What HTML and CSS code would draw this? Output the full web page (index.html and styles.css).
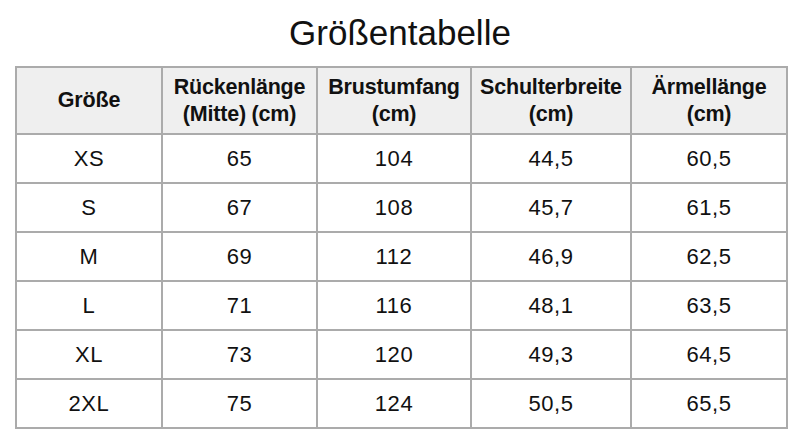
FILE: index.html
```html
<!DOCTYPE html>
<html lang="de">
<head>
<meta charset="utf-8">
<title>Größentabelle</title>
<link rel="stylesheet" href="styles.css">
</head>
<body>
<h1 class="title">Größentabelle</h1>
<table class="size-table">
  <colgroup>
    <col class="c1"><col class="c2"><col class="c3"><col class="c4"><col class="c5">
  </colgroup>
  <thead>
    <tr>
      <th>Größe</th>
      <th>Rückenlänge<br>(Mitte) (cm)</th>
      <th>Brustumfang<br>(cm)</th>
      <th>Schulterbreite<br>(cm)</th>
      <th>Ärmellänge<br>(cm)</th>
    </tr>
  </thead>
  <tbody>
    <tr><td>XS</td><td>65</td><td>104</td><td>44,5</td><td>60,5</td></tr>
    <tr><td>S</td><td>67</td><td>108</td><td>45,7</td><td>61,5</td></tr>
    <tr><td>M</td><td>69</td><td>112</td><td>46,9</td><td>62,5</td></tr>
    <tr><td>L</td><td>71</td><td>116</td><td>48,1</td><td>63,5</td></tr>
    <tr><td>XL</td><td>73</td><td>120</td><td>49,3</td><td>64,5</td></tr>
    <tr><td>2XL</td><td>75</td><td>124</td><td>50,5</td><td>65,5</td></tr>
  </tbody>
</table>
</body>
</html>
```
FILE: styles.css
```css
html, body {
  margin: 0;
  padding: 0;
  background: #ffffff;
}
body {
  font-family: "Liberation Sans", Arial, sans-serif;
  color: #111111;
  width: 800px;
  height: 447px;
  overflow: hidden;
}
.title {
  margin: 0;
  height: 66px;
  line-height: 66px;
  font-size: 35px;
  font-weight: normal;
  text-align: center;
  color: #111111;
}
.size-table {
  margin: 0 0 0 15px;
  width: 771px;
  border-collapse: collapse;
  table-layout: fixed;
}
.c1 { width: 146px; }
.c2 { width: 155px; }
.c3 { width: 154px; }
.c4 { width: 160px; }
.c5 { width: 156px; }
.size-table th,
.size-table td {
  border: 2px solid #ababab;
  text-align: center;
  vertical-align: middle;
  padding: 0;
}
.size-table th {
  background: #efefef;
  height: 65px;
  font-size: 21.5px;
  font-weight: bold;
  line-height: 27px;
  letter-spacing: -0.2px;
}
.size-table td {
  height: 47px;
  font-size: 22px;
  letter-spacing: 0.6px;
}
```
